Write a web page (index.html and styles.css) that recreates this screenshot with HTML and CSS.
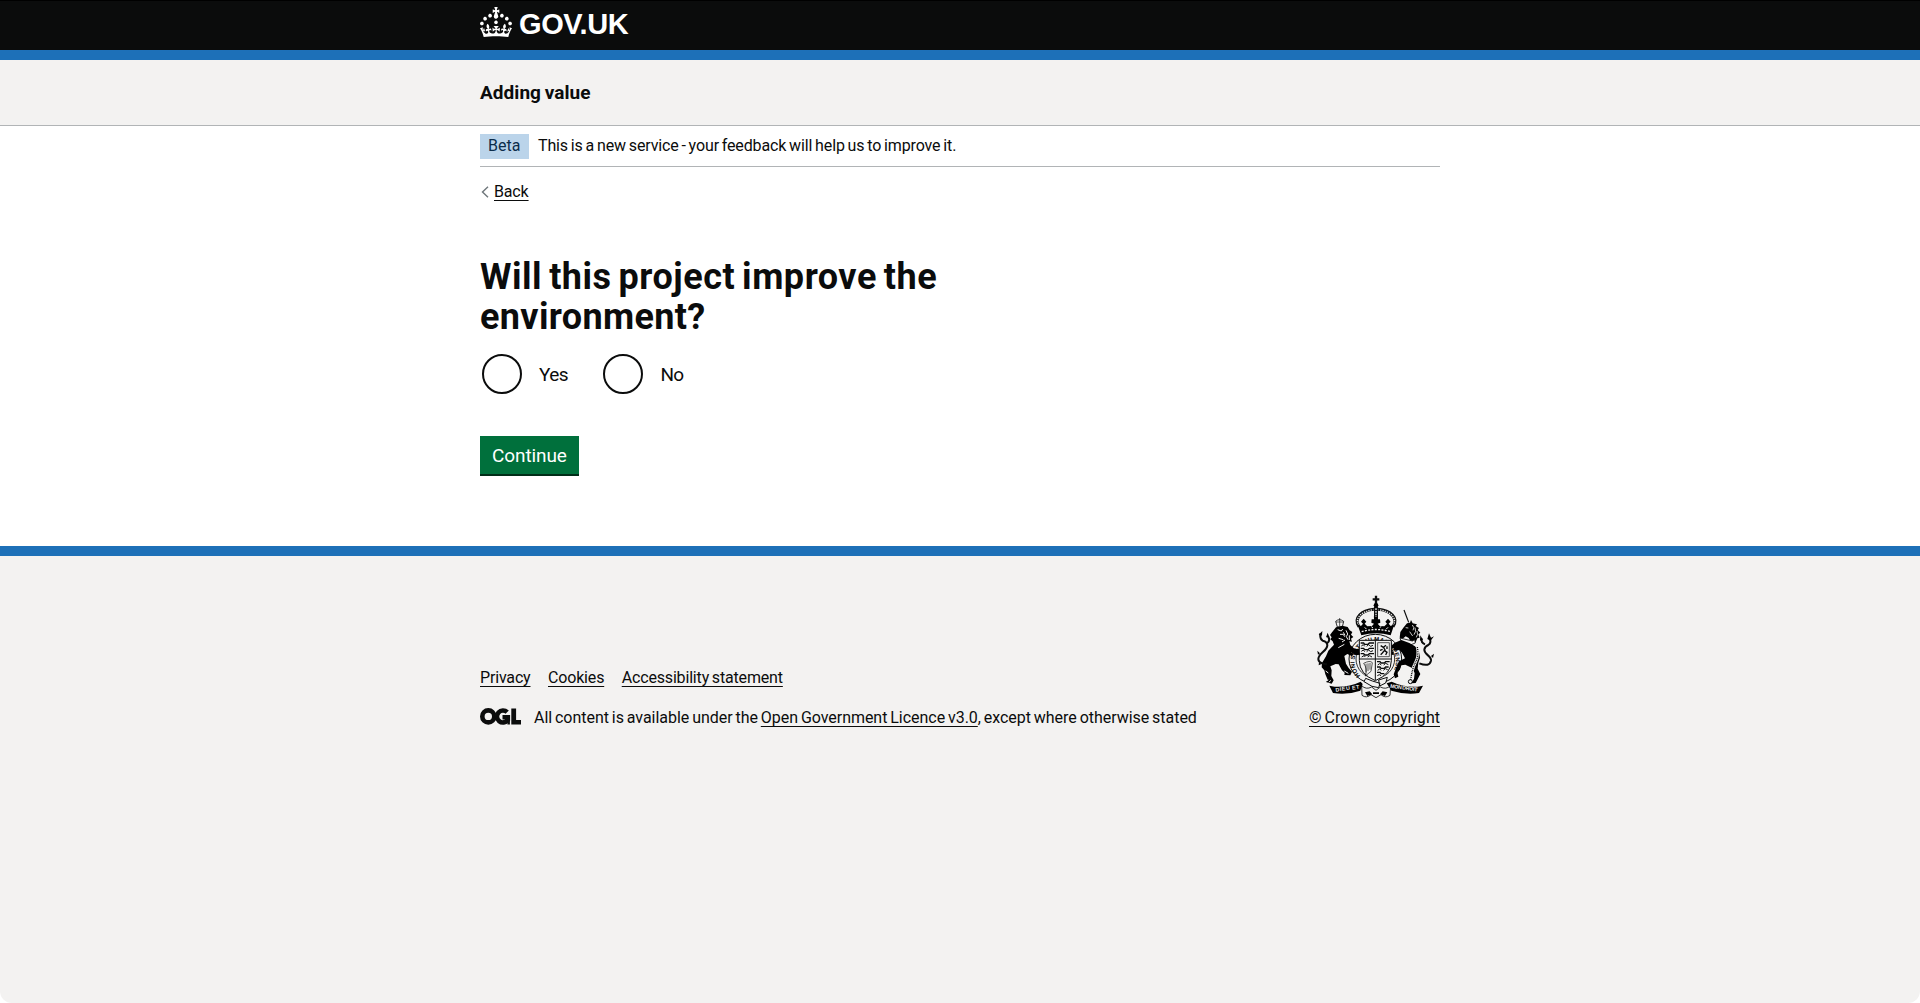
FILE: index.html
```html
<!DOCTYPE html>
<html lang="en">
<head>
<meta charset="utf-8">
<title>Will this project improve the environment?</title>
<link rel="stylesheet" href="styles.css">
</head>
<body>
<div class="page">
<header class="header">
  <div class="container header-inner">
    <svg class="crown" viewBox="0 0 32 30" fill="currentColor" aria-hidden="true"><path d="M22.6 10.4c-1 .4-2-.1-2.4-1-.4-.9.1-2 1-2.4.9-.4 2 .1 2.4 1s-.1 2-1 2.4m-5.9 6.7c-.9.4-2-.1-2.4-1-.4-.9.1-2 1-2.4.9-.4 2 .1 2.4 1s-.1 2-1 2.4m10.8-3.7c-1 .4-2-.1-2.4-1-.4-.9.1-2 1-2.4.9-.4 2 .1 2.4 1s0 2-1 2.4m3.3 4.8c-1 .4-2-.1-2.4-1-.4-.9.1-2 1-2.4.9-.4 2 .1 2.4 1s-.1 2-1 2.4M17 4.7l2.3 1.2V2.5l-2.3.7-.2-.2.9-3h-3.4l.9 3-.2.2c-.1.1-2.3-.7-2.3-.7v3.4L15 4.7c.1.1.1.2.2.2l-1.3 4c-.1.2-.1.4-.1.6 0 1.1.8 2 1.9 2.2h.7c1-.2 1.9-1.1 1.9-2.1 0-.2 0-.4-.1-.6l-1.3-4c-.1-.2 0-.2.1-.3m-7.6 5.7c.9.4 2-.1 2.4-1 .4-.9-.1-2-1-2.4-.9-.4-2 .1-2.4 1s0 2 1 2.4m-5 3c.9.4 2-.1 2.4-1 .4-.9-.1-2-1-2.4-.9-.4-2 .1-2.4 1s.1 2 1 2.4m-3.2 4.8c.9.4 2-.1 2.4-1 .4-.9-.1-2-1-2.4-.9-.4-2 .1-2.4 1s0 2 1 2.4m14.8 11c4.4 0 8.6.3 12.3.8 1.1-4.5 2.4-7 3.7-8.8l-2.5-.9c.2 1.3.3 1.9 0 2.7-.4-.4-.8-1.1-1.1-2.3l-1.2 4c.7-.5 1.3-.8 2-.9-1.1 2.5-2.6 3.1-3.5 3-1.1-.2-1.7-1.2-1.5-2.1.3-1.2 1.5-1.5 2.1-.1 1.1-2.3-.8-3-2-2.3 1.9-1.9 2.1-3.5.6-5.6-2.1 1.6-2.1 3.2-1.2 5.5-1.2-1.4-3.2-.6-2.5 1.6.9-1.4 2.1-.5 1.9.8-.2 1.1-1.7 2.1-3.5 1.9-2.7-.2-2.9-2.1-2.9-3.6.7-.1 1.9.5 2.9 1.9l.4-4.3c-1.1 1.1-2.1 1.4-3.2 1.4.4-1.2 2.1-3 2.1-3h-5.4s1.7 1.9 2.1 3c-1.1 0-2.1-.2-3.2-1.4l.4 4.3c1-1.4 2.2-2 2.9-1.9-.1 1.5-.2 3.4-2.9 3.6-1.9.2-3.4-.8-3.5-1.9-.2-1.3 1-2.2 1.9-.8.7-2.3-1.2-3-2.5-1.6.9-2.2.9-3.9-1.2-5.5-1.5 2-1.3 3.7.6 5.6-1.2-.7-3.1 0-2 2.3.6-1.4 1.8-1.1 2.1.1.2.9-.3 1.9-1.5 2.1-.9.2-2.4-.5-3.5-3 .6 0 1.2.3 2 .9l-1.2-4c-.3 1.1-.7 1.9-1.1 2.3-.3-.8-.2-1.4 0-2.7l-2.9.9C1.3 23 2.6 25.5 3.7 30c3.7-.5 7.9-.8 12.3-.8"/></svg>
    <span class="wordmark">GOV.UK</span>
  </div>
</header>
<div class="service-bar"><div class="container"><strong class="service-name">Adding value</strong></div></div>
<main class="container main">
  <div class="phase-banner"><strong class="tag">Beta</strong><span class="phase-text">This is a new service - your feedback will help us to improve it.</span></div>
  <a class="back" href="#"><svg class="chevron" viewBox="0 0 8 12" aria-hidden="true"><path d="M7 .8 1.5 6 7 11.2" fill="none" stroke="#6f777b" stroke-width="1.4"/></svg><span class="link">Back</span></a>
  <h1 class="heading"><span class="heading-lead">Will this project improve the</span> <br>environment?</h1>
  <div class="radios">
    <label class="radio"><input class="radio-input" type="radio" name="environment"><span class="radio-label">Yes</span></label>
    <label class="radio"><input class="radio-input" type="radio" name="environment"><span class="radio-label">No</span></label>
  </div>
  <button class="button">Continue</button>
</main>
<footer class="footer">
  <div class="container footer-inner">
    <div class="footer-meta">
      <nav class="footer-links">
        <a class="link" href="#">Privacy</a><a class="link" href="#">Cookies</a><a class="link" href="#">Accessibility statement</a>
      </nav>
      <div class="licence">
        <svg class="ogl" viewBox="0 0 41 17" aria-hidden="true"><g fill="none" stroke="currentColor" stroke-width="4.6"><circle cx="8.3" cy="8.4" r="6"/><path d="M27.2 4.2A6 6 0 1 0 27.8 12V9.3H22.5"/></g><path d="M27.4 8h2.5v8.6h-2.5zM31.3.4h4.8v11.7H41v4.5h-9.7z" fill="currentColor"/></svg>
        <span class="licence-text">All content is available under the <a class="link" href="#">Open Government Licence v3.0</a>, except where otherwise stated</span>
      </div>
    </div>
    <a class="copyright" href="#">
      <svg class="crest" viewBox="50 30 351 312" aria-hidden="true">
        <!-- crown -->
        <g fill="none" stroke="#0b0c0c">
          <path d="M227 32v25M217 43h20" stroke-width="7"/>
          <path d="M227 66v40" stroke-width="12"/>
          <path d="M227 70v34" stroke="#f3f2f1" stroke-width="4" stroke-dasharray="5 3"/>
          <path d="M176 125C158 99 184 76 221 73M278 125c18-26-8-49-45-52" stroke-width="9"/>
          <path d="M176 122C161 99 184 79 219 74M278 122c15-23-8-43-43-48" stroke="#f3f2f1" stroke-width="4" stroke-dasharray="4 3"/>
        </g>
        <circle cx="227" cy="61" r="7"/>
        <path d="M171 118l11 5 6-7-6-6 8-9 8 9-5 6 8 8 14-1 6-7-8-3 1-10h9l-3-8h13l-3 8h9l1 10-8 3 6 7 14 1 8-8-5-6 8-9 8 9-6 6 6 7 11-5-11 33q-43-13-88 0z"/>
        <path d="M184 140q43-13 87 0" fill="none" stroke="#f3f2f1" stroke-width="4" stroke-dasharray="6 4"/>
        <path d="M193 127l5 5M213 125l5 4M238 128l5-4M258 132l5-5" stroke="#f3f2f1" stroke-width="3"/>
        <!-- garter ring -->
        <ellipse cx="225" cy="222" rx="79" ry="74" fill="#f3f2f1" stroke="#0b0c0c" stroke-width="3"/>
        <ellipse cx="225" cy="222" rx="58" ry="57" fill="none" stroke="#0b0c0c" stroke-width="2.5"/>
        <path id="garter" d="M180 272A62 61 0 1 1 269 272" fill="none"/>
        <text class="crest-motto"><textPath href="#garter" textLength="266">HONI SOIT QUI MAL Y PENSE</textPath></text>
        <!-- lion -->
        <g>
          <path d="M111 126l-5-17q11-10 24 0l-4 17z" fill="#f3f2f1" stroke="#0b0c0c" stroke-width="2.5"/>
          <path d="M118 99v25M107 111h23" stroke="#0b0c0c" stroke-width="2"/>
          <path d="M107 127l19-5 16 4 6 10 8 5-4 8 7 7-7 5 3 9-8-1 3 11 13 12 12-1 5 7-8 8-11-3-9-2 8 6-5 7-14-7-9 6 5 23 8 13 10 11-5 11-18-1 1-7-8-7-10-18-9-1-16 7 4 12-1 17 7 13-6 10-17-5 5-7-7-16-3-12-8-9 1-13 12-20 7-17 17-18-4-10-7-6 4-6-5-7 6-8z"/>
          <path d="M80 238q-33-4-24-23c5-13 24-18 25-34q0-11-14-14-9-5-7-22M81 174q10-8 2-20" fill="none" stroke="#0b0c0c" stroke-width="6"/>
          <path d="M55 149l11-11-1 14zM77 157l5-14 5 13zM53 209l-2-12 8 8zM56 232l-1 9 9-4z"/>
          <path d="M112 134l11 4 4-6M119 148h10l4 7M137 136l5 11-4 8 5 9M115 160l14 4M129 142l5 9M147 151v14M125 171l9-6M132 178l-18 10M76 258l8 6M132 258l12 7M84 285l-8 3M91 286l-5 6M144 274l-7 3" fill="none" stroke="#f3f2f1" stroke-width="3"/>
        </g>
        <!-- unicorn -->
        <g>
          <path d="M325 112L311 75" stroke="#0b0c0c" stroke-width="3.5"/>
          <path d="M300 141l9-13 11-13 9-2 3-8 5 10 13 3-4 5 10 6-4 6 8 8-6 5 4 10-7 2-5 12-13 1-8-14-9-5-9 7-9-3z"/>
          <path d="M316 128l8 1M336 120q8 8 2 16M344 128q5 12-3 21M328 140l9 13M350 138q4 11-2 19" fill="none" stroke="#f3f2f1" stroke-width="2.5"/>
          <path d="M299 159l37 9 7-4 2 10-13 5-29-8z" fill="#f3f2f1" stroke="#0b0c0c" stroke-width="2.5"/>
          <path d="M282 174l21-9 24 9 17 10 12 16 3 18-5 15-2 18 8 16-8 16-6 11-13 1 8-14 2-17-9-16-19-9-12 2-5 14-7 6 3 14-10 5-4-12 8-21 8-18 18-9-9-17-16-17-15 6 7 17-10 1-7-17z"/>
          <path d="M357 235q31 12 35-8c2-15-21-18-20-33q1-10 12-14 11-7 3-21M374 178q-13-5-10-18" fill="none" stroke="#0b0c0c" stroke-width="6"/>
          <path d="M381 162l5-17 6 13 9-4-10 13zM359 167l1-16 8 13zM398 219l3-13-9 7z"/>
          <path d="M351 186q5 27-5 45t-15 54" fill="none" stroke="#f3f2f1" stroke-width="8"/>
          <path d="M351 186q5 27-5 45t-15 54" fill="none" stroke="#0b0c0c" stroke-width="4" stroke-dasharray="3 2.5"/>
          <circle cx="330" cy="290" r="6" fill="none" stroke="#0b0c0c" stroke-width="3"/>
        </g>
        <!-- shield -->
        <path d="M177 166h96v61q0 40-48 60-48-20-48-60z" fill="#f3f2f1" stroke="#0b0c0c" stroke-width="3"/>
        <path d="M225 166v119M177 222h96" stroke="#0b0c0c" stroke-width="3"/>
        <g fill="none" stroke="#0b0c0c" stroke-width="4">
          <path d="M181 174h9l3 4h10l4-4h14M181 190h9l3 4h10l4-4h14M181 206h9l3 4h10l4-4h14M230 230h9l3 4h10l4-4h12M230 246h9l3 4h10l4-4h9M230 262h9l3 4h10"/>
          <path d="M183 183l6-4 4 5M199 184l6-5 6 5 7-3M183 199l6-4 4 5M199 200l6-5 6 5 7-3M184 216l7-4 4 4M202 216l6-4 7 4M232 240l6-4 5 4M250 240l6-5 8 4M232 256l6-4 5 4M249 256l6-5 7 3M231 272l6-3 5 3" stroke-width="3"/>
          <path d="M232 173h35v42h-35z" stroke-width="2"/>
          <path d="M241 182l8 5 8-6M249 186l5 9-8 9-5 5M253 197l7 5-4 8M247 193l-8 3M260 184v8" stroke-width="4"/>
          <path d="M190 235q19-10 26-2l-4 26-17 14q7-23-5-38zM197 236v26M203 235v23M209 234v20" stroke-width="2"/>
        </g>
        <path d="M177 201l-17-6-6 8 13 8 12-2z"/>
        <path d="M278 186l10-13 14 6-5 16-14 2z"/>
        <!-- buckle and motto scroll -->
        <path d="M196 280l20 8 23 7-4 13-20-4-24-14zM235 285l26-8-5 17-18 9z" fill="#f3f2f1" stroke="#0b0c0c" stroke-width="3"/>
        <path d="M184 302q13 13 30 4l13 10 13-10q17 9 31-4l-2 29q-14 10-27-2l-15 9-15-9q-14 12-27 2z" fill="#f3f2f1" stroke="#0b0c0c" stroke-width="2.5"/>
        <path d="M194 322l14-3 8 9-15 5zM239 328l8-9 14 3-7 11zM218 322h18v5h-18z"/>
        <path d="M87 302l16 3q43 2 78-15l6 7-7 20q-37 13-82 7zM368 302l-16 3q-43 2-78-15l-15 5 14 22q42 13 83 7z"/>
        <text class="crest-scroll" x="106" y="320" textLength="72" transform="rotate(-7 106 320)">DIEU ET</text>
        <text class="crest-scroll" x="269" y="308" textLength="82" transform="rotate(8 269 308)">MON DROIT</text>
      </svg>
      <span class="link copyright-text">© Crown copyright</span>
    </a>
  </div>
</footer>
</div>
</body>
</html>
```
FILE: styles.css
```css
* { box-sizing: border-box; }
body { margin: 0; background: #fff; color: #0b0c0c; font: 16px/20px Roboto, "Liberation Sans", sans-serif; word-spacing: -1px; letter-spacing: -.15px; }
.page { min-height: 100vh; display: flex; flex-direction: column; }
.container { width: 960px; margin: 0 auto; }
.header { height: 60px; background: #0b0c0c; border-top: 1px solid #000; border-bottom: 10px solid #1d70b8; color: #fff; }
.header-inner { display: flex; align-items: flex-start; padding-top: 6px; }
.crown { width: 32px; height: 30px; }
.wordmark { margin-left: 7px; font: bold 29px/34px "Liberation Sans", sans-serif; letter-spacing: -.4px; }
.service-bar { background: #f3f2f1; border-bottom: 1px solid #b1b4b6; padding: 20px 0; }
.service-name { display: block; font-size: 19px; line-height: 25px; letter-spacing: .05px; }
.main { height: 420px; }
.phase-banner { display: flex; align-items: center; gap: 9px; padding: 8px 0 7px; border-bottom: 1px solid #b1b4b6; }
.phase-text { padding-bottom: 2px; letter-spacing: -.13px; }
.tag { width: 49px; height: 25px; padding: 2px 0 0 8px; background: #bbd4ea; color: #0c2d4a; font-weight: 400; letter-spacing: .05px; }
.back { display: flex; align-items: center; width: max-content; margin-top: 15px; padding-left: 1px; gap: 5px; color: inherit; text-decoration: none; }
.chevron { width: 8px; height: 12px; }
.link { color: inherit; text-decoration: underline; text-decoration-thickness: 1px; text-underline-offset: 3px; }
.heading { margin: 55px 0 0; font-size: 36px; line-height: 40px; letter-spacing: .35px; word-spacing: -2.5px; }
.heading-lead { letter-spacing: .52px; }
.radios { display: flex; gap: 33.5px; margin-top: 15px; }
.radio { display: flex; align-items: center; height: 44px; gap: 17px; padding-left: 2px; font-size: 19px; line-height: 25px; }
.radio-label { letter-spacing: -.6px; }
.radio-input { appearance: none; width: 40px; height: 40px; margin: 0; border: 2px solid #0b0c0c; border-radius: 50%; background: #fff; }
.button { display: block; width: 99px; height: 40px; margin-top: 40px; padding: 0 0 0 12px; border: 0; border-bottom: 2px solid #002d18; background: #00703c; color: #fff; font: 19px/25px Roboto, sans-serif; letter-spacing: -.1px; text-align: left; }
.footer { flex: 1; background: #f3f2f1; border-top: 10px solid #1d70b8; border-radius: 0 0 12px 12px; }
.footer-inner { display: flex; justify-content: space-between; align-items: flex-end; padding-top: 39px; }
.footer-links { display: flex; gap: 17.5px; margin-bottom: 20px; letter-spacing: -.17px; }
.licence { display: flex; align-items: center; gap: 13px; }
.licence-text { letter-spacing: -.04px; }
.ogl { width: 41px; height: 17px; margin-bottom: 3px; }
.copyright { display: flex; flex-direction: column; align-items: flex-end; color: inherit; text-decoration: none; }
.copyright-text { letter-spacing: .03px; }
.crest { width: 117px; height: 104px; margin: 0 6px 9px 0; }
.crest-motto { font: bold 18px "Liberation Sans", sans-serif; letter-spacing: 0; }
.crest-scroll { font: bold 16px "Liberation Sans", sans-serif; fill: #f3f2f1; }
```
